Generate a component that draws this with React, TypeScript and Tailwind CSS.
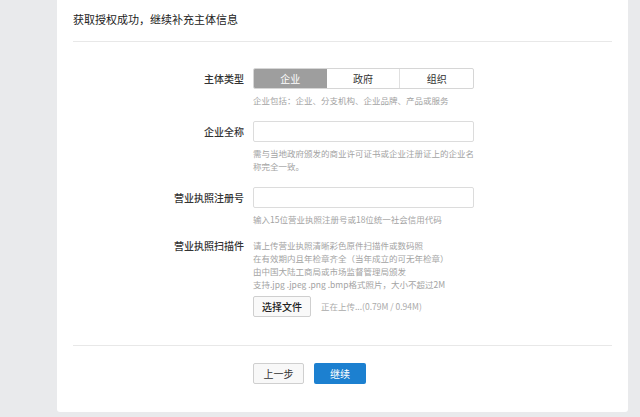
import type { ReactNode } from "react"

const font = { fontFamily: '"Noto Sans CJK SC", "Noto Sans", sans-serif' }

function Row({ label, children, labelClass = "leading-[21px]" }: { label: string; children: ReactNode; labelClass?: string }) {
  return (
    <div className="flex">
      <div className={`w-[187px] shrink-0 text-right text-[10px] font-medium text-[#333] ${labelClass}`}>{label}</div>
      <div className="ml-[9px] w-[221px]">{children}</div>
    </div>
  )
}

function Hint({ children }: { children: ReactNode }) {
  return <p className="mt-[5px] text-[8.5px] leading-[13px] text-[#a3a3a3]">{children}</p>
}

export default function App() {
  return (
    <div style={font} className="min-h-[417px] w-[640px] bg-[#e9eaec]">
      <div className="ml-[57px] w-[571px] rounded-b-[3px] bg-white pb-[28px]">
        <div className="mx-[16px] border-b border-[#e8e8e8] pt-[12px] pb-[14px]">
          <h1 className="text-[11px] leading-[15px] text-[#222]">获取授权成功，继续补充主体信息</h1>
        </div>

        <div className="pt-[26px]">
          <Row label="主体类型">
            <div className="flex h-[21px] overflow-hidden rounded-[2px] border border-[#d6d6d6] text-[10px]">
              <div className="flex flex-1 items-center justify-center bg-[#9e9e9e] text-white">企业</div>
              <div className="flex flex-1 items-center justify-center border-r border-[#e0e0e0] text-[#333]">政府</div>
              <div className="flex flex-1 items-center justify-center text-[#333]">组织</div>
            </div>
            <Hint>企业包括：企业、分支机构、企业品牌、产品或服务</Hint>
          </Row>

          <div className="mt-[14px]">
            <Row label="企业全称">
              <div className="h-[21px] rounded-[2px] border border-[#dcdcdc] bg-white" />
              <Hint>
                需与当地政府颁发的商业许可证书或企业注册证上的企业名
                <br />
                称完全一致。
              </Hint>
            </Row>
          </div>

          <div className="mt-[14px]">
            <Row label="营业执照注册号">
              <div className="h-[21px] rounded-[2px] border border-[#dcdcdc] bg-white" />
              <Hint>输入15位营业执照注册号或18位统一社会信用代码</Hint>
            </Row>
          </div>

          <div className="mt-[13px]">
            <Row label="营业执照扫描件" labelClass="leading-[13px]">
              <div className="text-[8.5px] leading-[13px] text-[#a3a3a3]">
                <p>请上传营业执照清晰彩色原件扫描件或数码照</p>
                <p>在有效期内且年检章齐全（当年成立的可无年检章）</p>
                <p>由中国大陆工商局或市场监督管理局颁发</p>
                <p>支持.jpg .jpeg .png .bmp格式照片，大小不超过2M</p>
              </div>
              <div className="mt-[5px] flex items-center">
                <button className="h-[21px] w-[58px] rounded-[2px] border border-[#cfcfcf] bg-[#f9f9f9] text-[10px] font-medium text-[#222]">
                  选择文件
                </button>
                <span className="ml-[10px] text-[8.5px] text-[#aaa]">正在上传...(0.79M / 0.94M)</span>
              </div>
            </Row>
          </div>
        </div>

        <div className="mx-[16px] mt-[28px] border-t border-[#e8e8e8]" />

        <div className="mt-[17px] flex pl-[196px]">
          <button className="h-[21px] w-[51px] rounded-[2px] border border-[#cfcfcf] bg-[#f8f8f8] text-[10px] text-[#333]">
            上一步
          </button>
          <button className="ml-[10px] h-[21px] w-[52px] rounded-[2px] bg-[#1c80d0] text-[10px] text-white">
            继续
          </button>
        </div>
      </div>
    </div>
  )
}
